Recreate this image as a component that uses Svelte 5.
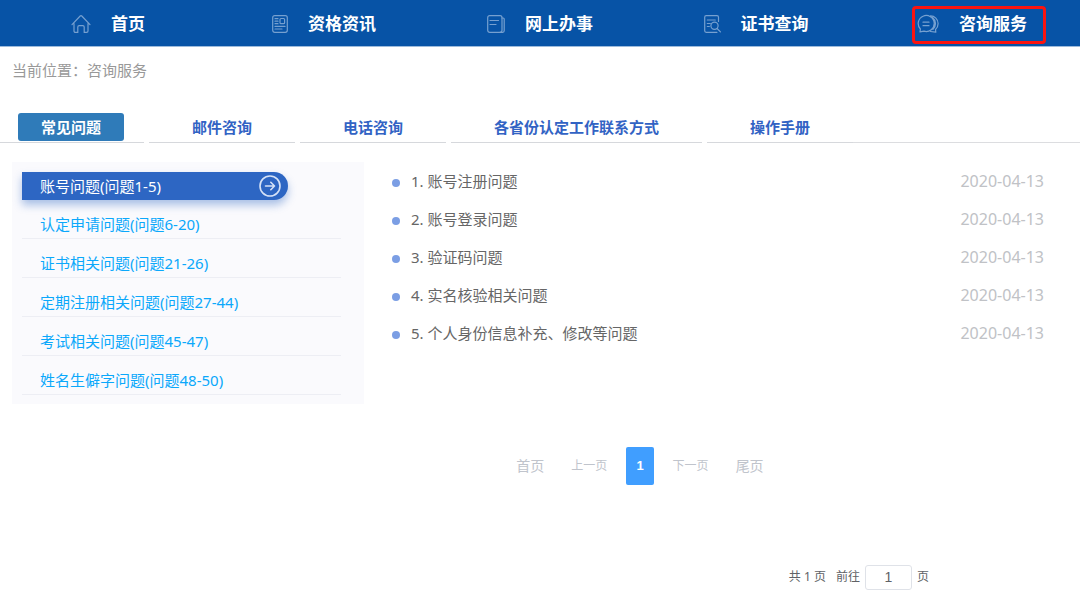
<script>
  const nav = [
    { icon: 'home', label: '首页' },
    { icon: 'news', label: '资格资讯' },
    { icon: 'doc', label: '网上办事' },
    { icon: 'search', label: '证书查询' },
    { icon: 'chat', label: '咨询服务' }
  ];
  const tabs = ['常见问题', '邮件咨询', '电话咨询', '各省份认定工作联系方式', '操作手册'];
  const groups = [
    '账号问题(问题1-5)',
    '认定申请问题(问题6-20)',
    '证书相关问题(问题21-26)',
    '定期注册相关问题(问题27-44)',
    '考试相关问题(问题45-47)',
    '姓名生僻字问题(问题48-50)'
  ];
  const questions = [
    '1. 账号注册问题',
    '2. 账号登录问题',
    '3. 验证码问题',
    '4. 实名核验相关问题',
    '5. 个人身份信息补充、修改等问题'
  ];
  let tab = $state(0);
  let group = $state(0);
  let page = $state('1');
</script>

<header>
  <nav>
    {#each nav as item, i}
      <div class="cell">
        <a href="#top" class:current={i === 4}>
          {#if item.icon === 'home'}
            <svg width="20" height="20" viewBox="0 0 20 20"><path d="M1 10.6 9.2 2a1.1 1.1 0 0 1 1.6 0L19 10.6M3 9.5V17a1.4 1.4 0 0 0 1.4 1.4h2.4V13a1.4 1.4 0 0 1 1.4-1.4h3.6a1.4 1.4 0 0 1 1.4 1.4v5.4h2.4A1.4 1.4 0 0 0 17 17V9.5" /></svg>
          {:else if item.icon === 'news'}
            <svg width="16" height="20" viewBox="0 0 16 20"><rect x="0.7" y="1.7" width="14.6" height="16.6" rx="2" /><rect x="8" y="4.5" width="4.6" height="5.2" rx="1" /><path d="M3 4.7h3M3 7.2h3M3 9.7h3M3 12.4h10M3 15h7" /></svg>
          {:else if item.icon === 'doc'}
            <svg width="18" height="20" viewBox="0 0 18 20"><rect x="0.7" y="1.7" width="14.3" height="16.6" rx="2" /><path d="M15 4h1.2a1 1 0 0 1 1 1v11.8a1.5 1.5 0 0 1-1.5 1.5H13M3 6.5h8.5M3 10.5h6" /></svg>
          {:else if item.icon === 'search'}
            <svg width="17" height="20" viewBox="0 0 17 20"><path d="M14.500 7.500V3.200a1.500 1.500 0 0 0-1.500-1.500H2.200A1.500 1.500 0 0 0 .7 3.200v13.600a1.500 1.500 0 0 0 1.500 1.500H13M3.300 6h8M3.300 9.500h3M3.300 12.500h2" /><circle cx="10.5" cy="11.800" r="3.600" /><path d="m13.100 14.500 3.300 3.300" /></svg>
          {:else}
            <svg width="22" height="20" viewBox="0 0 22 20"><path d="M3 17.800 3.400 15A8 8 0 1 1 7 17.200ZM6 8.200h6M6 11.700h6M13.500 1.800c4.200 0 7.600 3.500 7.600 7.700 0 2.500-1 4.600-2.600 6l.3 2.600-5.300-.6M15.500 3.500A7.800 7.800 0 0 1 16 15.300" /></svg>
          {/if}
          <span>{item.label}</span>
        </a>
      </div>
    {/each}
  </nav>
</header>

<p class="crumb">当前位置：咨询服务</p>

<div class="tabs">
  {#each tabs as label, i}
    <div class="tab"><button class:active={tab === i} onclick={() => (tab = i)}>{label}</button></div>
  {/each}
</div>

<main>
  <aside>
    {#each groups as label, i}
      <button class:active={group === i} onclick={() => (group = i)}>
        <span>{label}</span>
        {#if group === i}
          <svg width="22" height="22" viewBox="0 0 22 22"><circle cx="11" cy="11" r="10" /><path d="M6.500 11h9M11.800 7.300l3.700 3.700-3.700 3.700" /></svg>
        {/if}
      </button>
    {/each}
  </aside>
  <ul>
    {#each questions as q}
      <li><a href="#top">{q}</a><time>2020-04-13</time></li>
    {/each}
  </ul>
</main>

<div class="pager">
  <button class="edge">首页</button>
  <button>上一页</button>
  <button class="num">1</button>
  <button>下一页</button>
  <button class="edge">尾页</button>
</div>

<div class="jump">
  <span>共 1 页</span>
  <label for="page">前往</label>
  <input id="page" bind:value={page} />
  <span class="unit">页</span>
</div>

<style>
  :global(body) {
    background: #fff;
    font-family: 'Noto Sans', 'Noto Sans CJK SC', sans-serif;
    font-size: 15px;
    line-height: 28px;
  }
  button {
    border: 0;
    padding: 0;
    background: none;
    font: inherit;
    cursor: pointer;
  }
  a {
    color: inherit;
    text-decoration: none;
  }
  svg {
    fill: none;
    stroke: currentColor;
    stroke-linecap: round;
    stroke-linejoin: round;
  }
  header {
    background: #0753a6;
    border-bottom: 1px solid #9dbbdc;
  }
  nav {
    display: flex;
  }
  .cell {
    flex: 1;
    display: flex;
    justify-content: center;
  }
  .cell a {
    position: relative;
    display: flex;
    align-items: center;
    gap: 20px;
    padding: 10px 0 8px;
    color: #fff;
    font-size: 17px;
    font-weight: 700;
    white-space: nowrap;
  }
  .cell svg {
    color: #76a0d0;
    stroke-width: 1.2;
  }
  .cell a.current::after {
    content: '';
    position: absolute;
    inset: 6px -19px 2px -5px;
    border: 3px solid #fb1410;
    border-radius: 4px;
  }
  .crumb {
    margin: 0;
    padding: 9px 12px 0;
    color: #999;
  }
  .tabs {
    display: flex;
    gap: 5px;
    margin: 29px 0 0 -2px;
  }
  .tab {
    border-bottom: 1px solid #d6d8dc;
    padding-bottom: 1px;
    white-space: nowrap;
  }
  .tabs::after {
    content: '';
    flex: 1;
    margin-left: -5px;
    border-bottom: 1px solid #dcdde0;
  }
  .tab button {
    margin: 0 20px;
    padding: 0 23px;
    border-radius: 3px;
    color: #3263c4;
    font-weight: 700;
  }
  .tab button.active {
    background: #2f7bb9;
    color: #fff;
  }
  main {
    display: flex;
    align-items: flex-start;
    gap: 28px;
    padding: 19px 36px 0 12px;
  }
  aside {
    flex: 0 0 34.1%;
    box-sizing: border-box;
    padding: 10px 23px 9px 10px;
    background: #fafafd;
  }
  aside button {
    display: flex;
    align-items: center;
    justify-content: space-between;
    box-sizing: border-box;
    width: 100%;
    padding: 10px 0 0 18px;
    border-bottom: 1px solid #edeef4;
    color: #0ba8fb;
    text-align: left;
  }
  aside button.active {
    width: 83.4%;
    padding: 0 7px 0 18px;
    border-bottom: 0;
    border-radius: 0 14px 14px 0;
    background: #2d66c3;
    color: #fff;
    box-shadow: 0 5px 9px rgba(45, 102, 195, 0.4);
  }
  aside svg {
    color: #d5e2f7;
    stroke-width: 1.6;
  }
  ul {
    flex: 1;
    margin: 0;
    padding: 5px 0 1px;
    list-style: none;
  }
  li {
    display: flex;
    align-items: center;
    margin-bottom: 10px;
    color: #666;
  }
  li::before {
    content: '';
    width: 8px;
    height: 8px;
    margin: 3px 11px 0 0;
    border-radius: 50%;
    background: #7b9ee4;
  }
  time {
    margin-left: auto;
    color: #c0c2c6;
    font-size: 16px;
  }
  .pager {
    display: flex;
    align-items: center;
    justify-content: center;
    margin: 43px 0 0 200px;
    color: #c0c4cc;
    font-size: 12px;
  }
  .pager button {
    color: inherit;
  }
  .pager .edge {
    margin: 0 27px;
    font-size: 14px;
  }
  .pager .num {
    margin: 0 19px;
    padding: 5px 10px;
    border-radius: 2px;
    background: #409eff;
    color: #fff;
    font: 700 13px/28px 'Liberation Sans', sans-serif;
  }
  .jump {
    display: flex;
    align-items: center;
    justify-content: flex-end;
    margin: 78px 151px 0 0;
    color: #606266;
    font-family: 'Noto Sans', 'Noto Sans CJK SC', sans-serif;
    font-size: 12px;
  }
  .jump label {
    margin: 0 5px 0 10px;
  }
  .jump input {
    box-sizing: border-box;
    width: 47px;
    height: 25px;
    padding: 0;
    border: 1px solid #dfe2e8;
    border-radius: 3px;
    color: #606266;
    font: 14px 'Liberation Sans', sans-serif;
    text-align: center;
  }
  .jump .unit {
    margin-left: 5px;
  }
</style>
